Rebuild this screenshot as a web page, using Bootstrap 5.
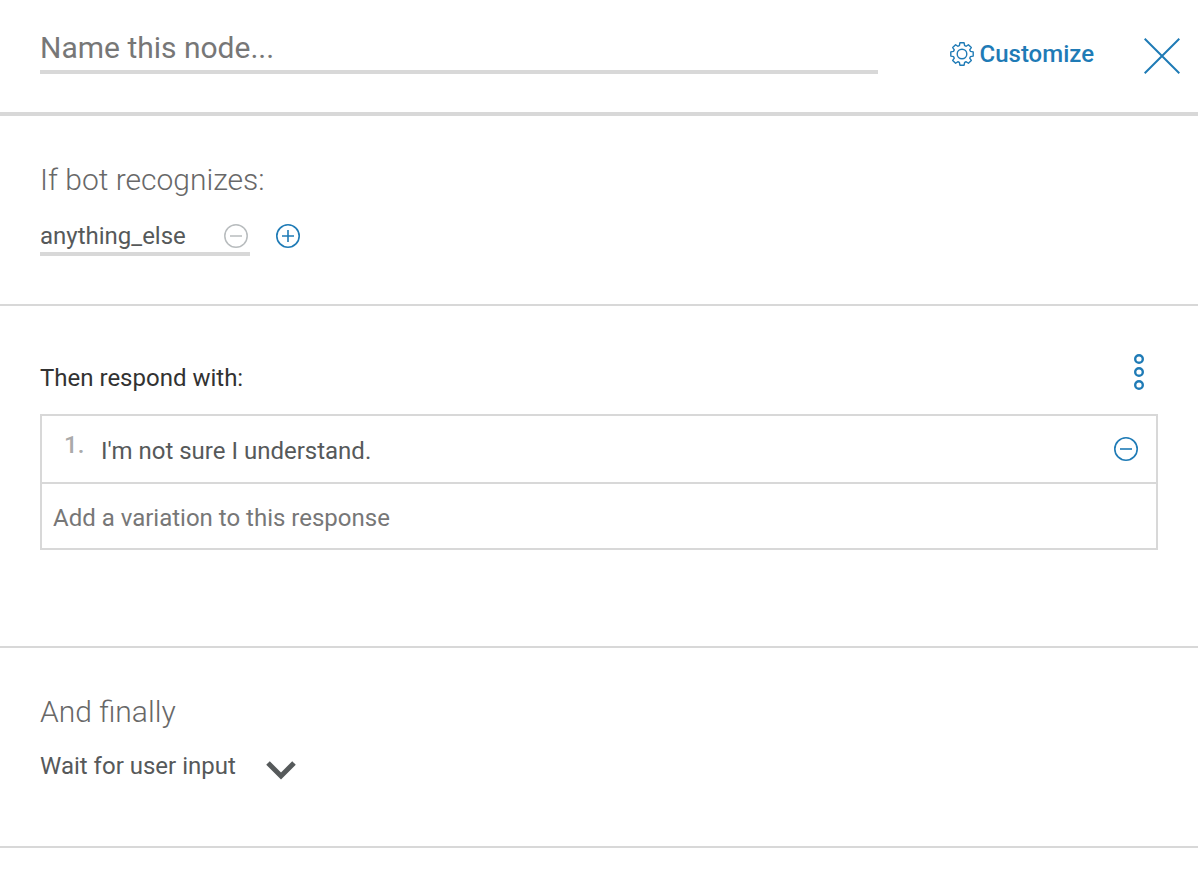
<!DOCTYPE html>
<html lang="en">
<head>
<meta charset="utf-8">
<meta name="viewport" content="width=device-width, initial-scale=1">
<title>Dialog node</title>
<link href="https://cdn.jsdelivr.net/npm/bootstrap@5.3.0/dist/css/bootstrap.min.css" rel="stylesheet">
<style>
  :root { --line: #d8d8d8; --accent: #1f7bb6; --ink: #56595a; --muted: #777; }
  body { font-family: Roboto, "Liberation Sans", sans-serif; font-size: 24px; line-height: 32px; color: var(--ink); background: #fff; }
  svg { display: block; fill: none; stroke: currentColor; }
  .bare { border: 0; border-radius: 0; padding: 0; background: transparent; color: inherit; line-height: 32px; outline-offset: 4px; }
  .bare::placeholder { color: var(--muted); opacity: 1; }
  .accent { color: var(--accent); }
  .node-header { padding: 30px 18px 38px 40px; border-bottom: 4px solid var(--line); }
  .node-name { font-size: 30px; height: 44px; padding-bottom: 6px; border-bottom: 4px solid var(--line); }
  .customize { margin-left: 72px; margin-right: 50px; gap: 6px; }
  .node-section { padding: 46px 40px 48px; border-bottom: 2px solid var(--line); }
  .section-title { font-size: 30px; font-weight: 300; line-height: 36px; color: #686868; margin: 0; }
  .conditions { margin-top: 22px; gap: 26px; }
  .condition { width: 210px; height: 36px; padding-right: 2px; border-bottom: 4px solid var(--line); }
  .add-btn { height: 32px; }
  .remove-off { color: #b8bcbe; }
  .respond { padding: 48px 40px 96px; }
  .respond-head { height: 60px; }
  .respond-title { font-size: 24px; font-weight: 400; line-height: 32px; color: #323232; margin: 0; padding-top: 8px; }
  .menu-btn { margin-right: 13px; }
  .responses { border: 2px solid var(--line); }
  .response-row { height: 66px; padding: 0 18px 0 22px; }
  .response-row + .response-row { padding: 0 11px; border-top: 2px solid var(--line); }
  .response-row input { padding-top: 4px; }
  .row-index { width: 37px; color: #aaa; font-weight: 500; padding-bottom: 8px; }
  .final { padding: 46px 40px 64px; }
  .jump { appearance: none; width: 256px; margin-top: 20px;
    background: url("data:image/svg+xml,%3Csvg xmlns='http://www.w3.org/2000/svg' viewBox='0 0 30 20'%3E%3Cpath d='M2 3L15 16L28 3' fill='none' stroke='%23565a5b' stroke-width='5'/%3E%3C/svg%3E") no-repeat right 10px / 30px 20px; }
</style>
</head>
<body>
<main>
  <header class="node-header d-flex align-items-start">
    <input class="bare node-name flex-fill" type="text" placeholder="Name this node..." aria-label="Node name">
    <button class="bare accent customize d-flex align-items-center fw-medium mt-2" type="button">
      <svg width="24" height="24" viewBox="0 0 24 24" stroke-width="1.4" stroke-linejoin="round" aria-hidden="true"><path d="M9.4 3.6L9.9 .8H14.1L14.6 3.6Q15.6 3.9 16.2 4.3L18.4 2.7L21.3 5.6L19.7 7.8Q20.1 8.4 20.4 9.4L23.2 9.9V14.1L20.4 14.6Q20.1 15.6 19.7 16.2L21.3 18.4L18.4 21.3L16.2 19.7Q15.6 20.1 14.6 20.4L14.1 23.2H9.9L9.4 20.4Q8.4 20.1 7.8 19.7L5.6 21.3L2.7 18.4L4.3 16.2Q3.9 15.6 3.6 14.6L.8 14.1V9.9L3.6 9.4Q3.9 8.4 4.3 7.8L2.7 5.6L5.6 2.7L7.8 4.3Q8.4 3.9 9.4 3.6Z"/><circle cx="12" cy="12" r="4.8"/></svg>
      <span>Customize</span>
    </button>
    <button class="bare accent mt-2" type="button" aria-label="Close">
      <svg width="36" height="36" viewBox="0 0 36 36" stroke-width="2" aria-hidden="true"><path d="M.7 .7L35.3 35.3M35.3 .7L.7 35.3"/></svg>
    </button>
  </header>

  <section class="node-section">
    <h2 class="section-title">If bot recognizes:</h2>
    <div class="conditions d-flex align-items-start">
      <div class="condition d-flex align-items-center">
        <input class="bare flex-fill w-100" type="text" value="anything_else" aria-label="Condition">
        <button class="bare remove-off" type="button" aria-label="Remove condition">
          <svg width="24" height="24" viewBox="0 0 24 24" stroke-width="1.5" aria-hidden="true"><circle cx="12" cy="12" r="11.2"/><path d="M6 12H18"/></svg>
        </button>
      </div>
      <button class="bare accent add-btn" type="button" aria-label="Add condition">
        <svg width="24" height="24" viewBox="0 0 24 24" stroke-width="1.6" aria-hidden="true"><circle cx="12" cy="12" r="11.2"/><path d="M6 12H18M12 6V18"/></svg>
      </button>
    </div>
  </section>

  <section class="node-section respond">
    <div class="respond-head d-flex justify-content-between align-items-start">
      <h2 class="respond-title">Then respond with:</h2>
      <button class="bare accent menu-btn" type="button" aria-label="Response options">
        <svg width="12" height="36" viewBox="0 0 12 36" stroke-width="2.4" aria-hidden="true"><circle cx="6" cy="5" r="3.8"/><circle cx="6" cy="18" r="3.8"/><circle cx="6" cy="31" r="3.8"/></svg>
      </button>
    </div>
    <div class="responses">
      <div class="response-row d-flex align-items-center">
        <span class="row-index">1.</span>
        <input class="bare flex-fill" type="text" value="I'm not sure I understand." aria-label="Response 1">
        <button class="bare accent" type="button" aria-label="Remove response">
          <svg width="24" height="24" viewBox="0 0 24 24" stroke-width="1.6" aria-hidden="true"><circle cx="12" cy="12" r="11.2"/><path d="M6 12H18"/></svg>
        </button>
      </div>
      <div class="response-row d-flex align-items-center">
        <input class="bare flex-fill" type="text" placeholder="Add a variation to this response" aria-label="Add a variation">
      </div>
    </div>
  </section>

  <section class="node-section final">
    <h2 class="section-title"><label for="finally">And finally</label></h2>
    <select class="bare jump d-block" id="finally"><option>Wait for user input</option></select>
  </section>
</main>
<script src="https://cdn.jsdelivr.net/npm/bootstrap@5.3.0/dist/js/bootstrap.bundle.min.js"></script>
</body>
</html>
